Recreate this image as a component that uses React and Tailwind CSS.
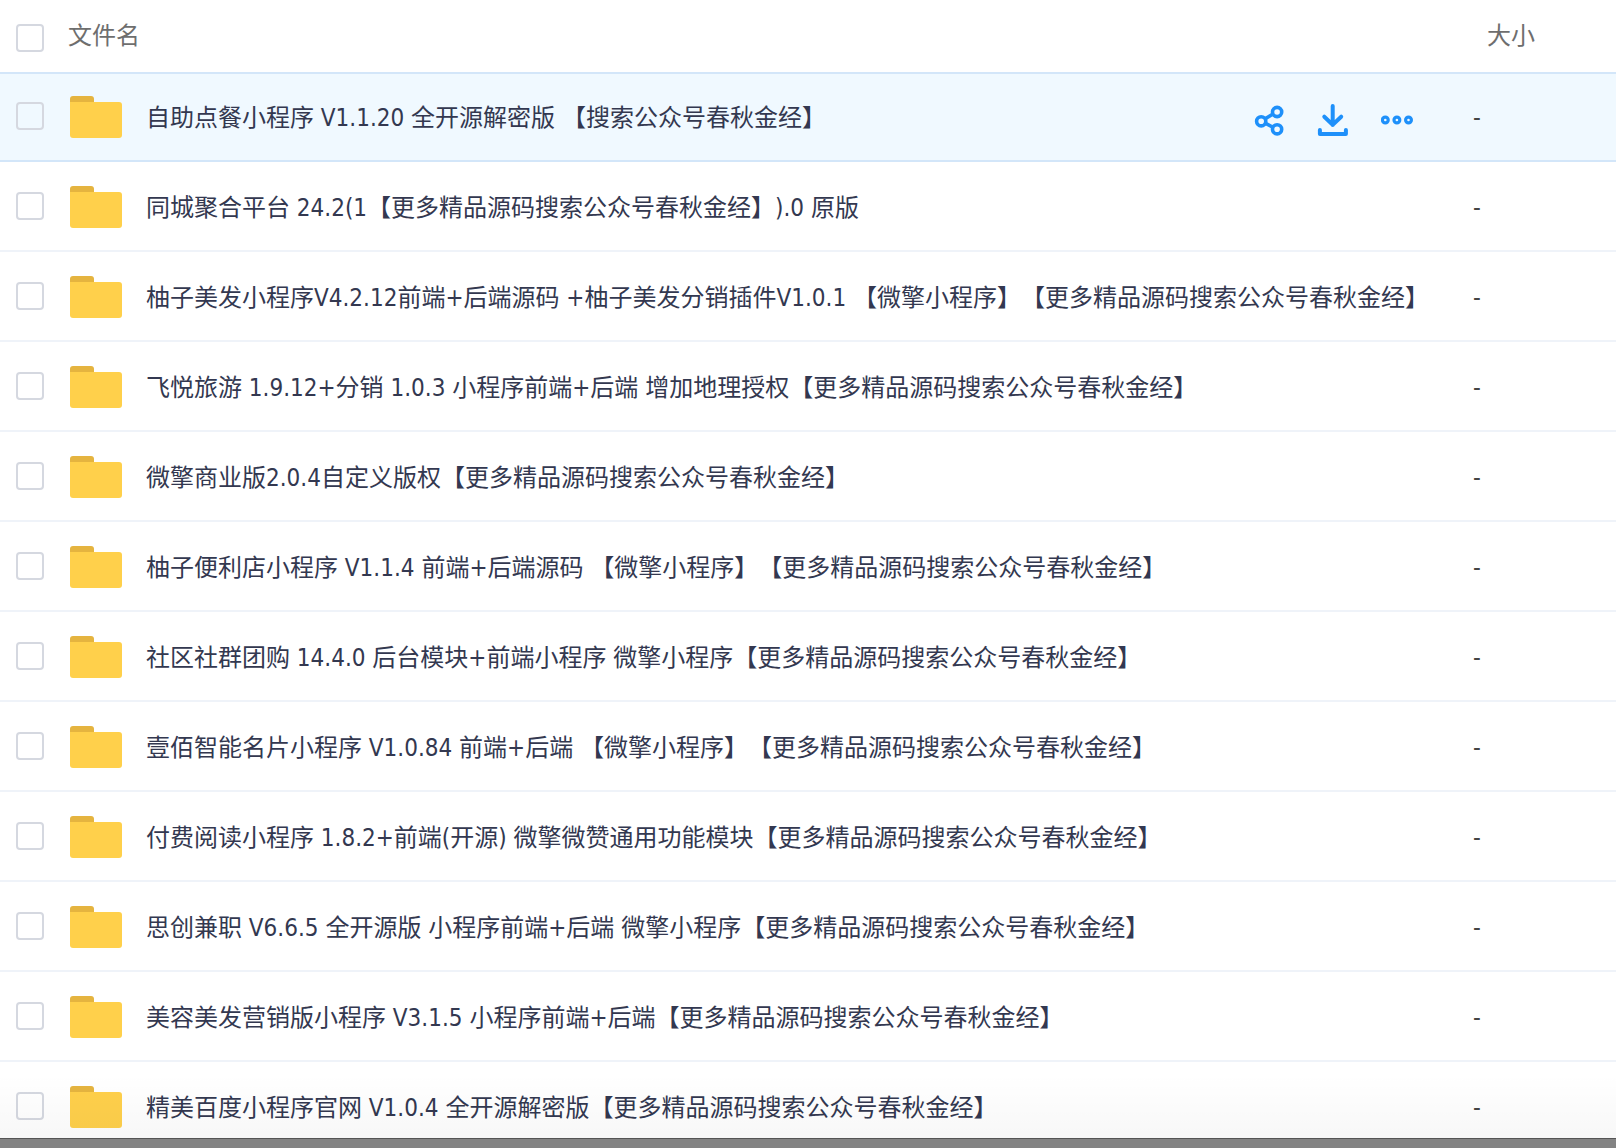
import { useState } from 'react';
import clsx from 'clsx';

const FILES = [
  '自助点餐小程序 V1.1.20 全开源解密版 【搜索公众号春秋金经】',
  '同城聚合平台 24.2(1【更多精品源码搜索公众号春秋金经】).0 原版',
  '柚子美发小程序V4.2.12前端+后端源码 +柚子美发分销插件V1.0.1 【微擎小程序】【更多精品源码搜索公众号春秋金经】',
  '飞悦旅游 1.9.12+分销 1.0.3 小程序前端+后端 增加地理授权【更多精品源码搜索公众号春秋金经】',
  '微擎商业版2.0.4自定义版权【更多精品源码搜索公众号春秋金经】',
  '柚子便利店小程序 V1.1.4 前端+后端源码 【微擎小程序】【更多精品源码搜索公众号春秋金经】',
  '社区社群团购 14.4.0 后台模块+前端小程序 微擎小程序【更多精品源码搜索公众号春秋金经】',
  '壹佰智能名片小程序 V1.0.84 前端+后端 【微擎小程序】【更多精品源码搜索公众号春秋金经】',
  '付费阅读小程序 1.8.2+前端(开源) 微擎微赞通用功能模块【更多精品源码搜索公众号春秋金经】',
  '思创兼职 V6.6.5 全开源版 小程序前端+后端 微擎小程序【更多精品源码搜索公众号春秋金经】',
  '美容美发营销版小程序 V3.1.5 小程序前端+后端【更多精品源码搜索公众号春秋金经】',
  '精美百度小程序官网 V1.0.4 全开源解密版【更多精品源码搜索公众号春秋金经】',
];

function FolderIcon() {
  return (
    <svg width="52" height="42" viewBox="0 0 52 42" className="shrink-0" aria-hidden>
      <path d="M0 12V3a3 3 0 0 1 3-3h18a3 3 0 0 1 3 3v9z" fill="#e5b43f" />
      <path d="M0 6h49a3 3 0 0 1 3 3v30a3 3 0 0 1-3 3H3a3 3 0 0 1-3-3z" fill="#ffd04b" />
    </svg>
  );
}

function ShareIcon() {
  return (
    <svg width="32" height="32" viewBox="0 0 32 32" fill="none" stroke="currentColor" strokeWidth="3.6" aria-hidden>
      <circle cx="8.2" cy="17.3" r="4.6" />
      <circle cx="24.1" cy="8" r="4.6" />
      <circle cx="24.1" cy="25.300" r="4.6" />
      <path d="M12.200 14.800l8-5M12.200 19.200l8 4.200" />
    </svg>
  );
}

function DownloadIcon() {
  return (
    <svg
      width="32"
      height="32"
      viewBox="0 0 32 32"
      fill="none"
      stroke="currentColor"
      strokeWidth="4"
      strokeLinecap="round"
      strokeLinejoin="round"
      aria-hidden
    >
      <path d="M15.700 2v19M7.300 12.700l8.400 8 8.500-8" />
      <path d="M2.900 26v4h26v-4" />
    </svg>
  );
}

function MoreIcon() {
  return (
    <svg width="32" height="32" viewBox="0 0 32 32" fill="none" stroke="currentColor" strokeWidth="3.2" aria-hidden>
      <circle cx="4.3" cy="16" r="2.9" />
      <circle cx="15.900" cy="16" r="2.9" />
      <circle cx="27.500" cy="16" r="2.9" />
    </svg>
  );
}

function Checkbox({ label, checked, onChange }) {
  return (
    <input
      type="checkbox"
      aria-label={label}
      checked={checked}
      onChange={onChange}
      className="block h-7 w-7 appearance-none rounded border-2 border-[#d5d8e0] checked:border-[#1e90fa] checked:bg-[#1e90fa]"
    />
  );
}

function RowActions() {
  return (
    <div className="mr-[60px] flex shrink-0 gap-8 pt-1.5 text-[#1e90fa]">
      <button type="button" aria-label="分享">
        <ShareIcon />
      </button>
      <button type="button" aria-label="下载">
        <DownloadIcon />
      </button>
      <button type="button" aria-label="更多">
        <MoreIcon />
      </button>
    </div>
  );
}

function FileRow({ name, active, checked, onToggle }) {
  const cell = clsx('border-y-2 p-0', active ? 'border-[#d3e6f9]' : 'border-t-transparent border-b-[#eff3f9]');

  return (
    <tr className={clsx('h-[90px]', active && 'bg-[#f0f9ff]')}>
      <td className={cell}>
        <div className="pb-0.5 pl-4">
          <Checkbox label={name} checked={checked} onChange={onToggle} />
        </div>
      </td>
      <td className={cell}>
        <div className="flex items-center pl-0.5">
          <FolderIcon />
          <a href="#" className="ml-6 min-w-0 flex-1 truncate pt-0.5 text-[#333850]">
            {name}
          </a>
          {active && <RowActions />}
        </div>
      </td>
      <td className={clsx(cell, 'text-[#444444]')}>
        <div className="pt-0.5">-</div>
      </td>
    </tr>
  );
}

export default function App() {
  const [selected, setSelected] = useState([]);
  const allSelected = selected.length === FILES.length;

  const toggle = (name) =>
    setSelected((prev) => (prev.includes(name) ? prev.filter((n) => n !== name) : [...prev, name]));

  return (
    <div className="flex h-screen flex-col bg-white font-['DejaVu_Sans_Condensed','Noto_Sans_CJK_SC',sans-serif] text-2xl [text-spacing-trim:space-all]">
      <main className="relative min-h-0 flex-1 overflow-hidden">
        <table className="w-full table-fixed border-separate border-spacing-0 text-left">
          <thead>
            <tr className="h-[72px] text-[#6e6e6e]">
              <th className="w-[68px] p-0">
                <div className="pt-1 pl-4">
                  <Checkbox
                    label="全选"
                    checked={allSelected}
                    onChange={() => setSelected(allSelected ? [] : FILES)}
                  />
                </div>
              </th>
              <th className="p-0 font-normal">文件名</th>
              <th className="w-[143px] p-0 pl-3.5 font-normal">大小</th>
            </tr>
          </thead>
          <tbody>
            {FILES.map((name, i) => (
              <FileRow
                key={name}
                name={name}
                active={i === 0}
                checked={selected.includes(name)}
                onToggle={() => toggle(name)}
              />
            ))}
          </tbody>
        </table>
        {/* soft shade above the bottom edge */}
        <div className="pointer-events-none absolute inset-x-0 bottom-0 h-16 bg-linear-to-b from-transparent to-black/3" />
      </main>
      <div className="h-2.5 shrink-0 border-t border-[#555555] bg-[#838383]" />
    </div>
  );
}
